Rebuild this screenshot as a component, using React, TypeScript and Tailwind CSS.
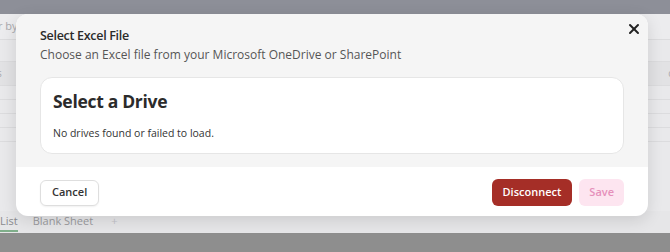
import { X } from 'lucide-react';

const font = { fontFamily: '"Open Sans", "Noto Sans", sans-serif' };

const App: React.FC = () => {
  return (
    <div className="relative h-[252px] w-[670px] overflow-hidden bg-[#e9e9eb]" style={font}>
      {/* dimmed page behind the dialog */}
      <div className="flex h-full flex-col">
        <div className="h-[14px] bg-[#8d8f98]" />
        <div className="flex flex-1 flex-col">
          <div className="flex h-[26px] items-center border-b border-[#dcdcde] bg-[#ececee] text-[11px] text-[#a9a9ad]">
            <span className="-ml-[2px]">r by</span>
          </div>
          <div className="h-[22px] border-b border-[#dcdcde]" />
          <div className="flex h-[24px] items-center justify-between border-b border-[#dcdcde] bg-[#e2e2e4] text-[10px] text-[#a9a9ad]">
            <span className="-ml-[3px]">s</span>
            <span className="mr-[-3px]">c</span>
          </div>
          <div className="h-[14px] border-b border-[#dcdcde]" />
          <div className="h-[14px] border-b border-[#dcdcde]" />
          <div className="h-[14px] border-b border-[#dcdcde]" />
          <div className="h-[14px] border-b border-[#dcdcde]" />
          <div className="flex-1" />
        </div>
        <div className="flex h-[22px] items-start gap-[15px] bg-[#e6e6e8] pt-[3px] text-[11px] leading-[14px] text-[#8a8a8e]">
          <span className="border-b-2 border-[#7fae8a] pb-[2px]">List</span>
          <span className="text-[#9a9a9e]">Blank Sheet</span>
          <span className="ml-[3px] text-[#c4c4c8]">+</span>
        </div>
        <div className="h-[19px] bg-[#8e8e8e]" />
      </div>

      {/* dialog */}
      <div className="absolute left-[16px] top-[14px] w-[632px] overflow-hidden rounded-[12px] bg-white shadow-[0_4px_16px_rgba(0,0,0,0.12)]">
        <div className="relative bg-[#f5f5f5] px-[24px] pb-[13px] pt-[13px]">
          <button className="absolute right-[6px] top-[6px] flex h-[17px] w-[17px] items-center justify-center text-[#222]">
            <X size={16} strokeWidth={3} />
          </button>
          <h2 className="text-[12.5px] font-semibold leading-[18px] tracking-[-0.3px] text-[#2b2b2b]">Select Excel File</h2>
          <p className="mt-[1px] text-[12px] leading-[18px] text-[#555]">
            Choose an Excel file from your Microsoft OneDrive or SharePoint
          </p>
          <div className="mt-[13px] h-[77px] rounded-[12px] border border-[#e6e6e6] bg-white px-[12px] pt-[11px]">
            <h3 className="text-[17.5px] font-bold leading-[24px] tracking-[-0.3px] text-[#2b2b2b]">Select a Drive</h3>
            <p className="mt-[13px] text-[10.5px] leading-[14px] text-[#333]">No drives found or failed to load.</p>
          </div>
        </div>
        <div className="flex items-center justify-between px-[24px] pb-[10px] pt-[12px]">
          <button className="h-[26px] rounded-[6px] border border-[#dedede] bg-white px-[11px] text-[11px] font-semibold text-[#333] shadow-[0_1px_2px_rgba(0,0,0,0.06)]">
            Cancel
          </button>
          <div className="flex items-center gap-[7px]">
            <button className="h-[27px] rounded-[6px] bg-[#a52e27] px-[11px] text-[11px] font-semibold text-white">
              Disconnect
            </button>
            <button className="h-[27px] rounded-[6px] bg-[#fde5f0] px-[10px] text-[11px] font-semibold text-[#e690bb]">
              Save
            </button>
          </div>
        </div>
      </div>
    </div>
  );
};

export default App;
